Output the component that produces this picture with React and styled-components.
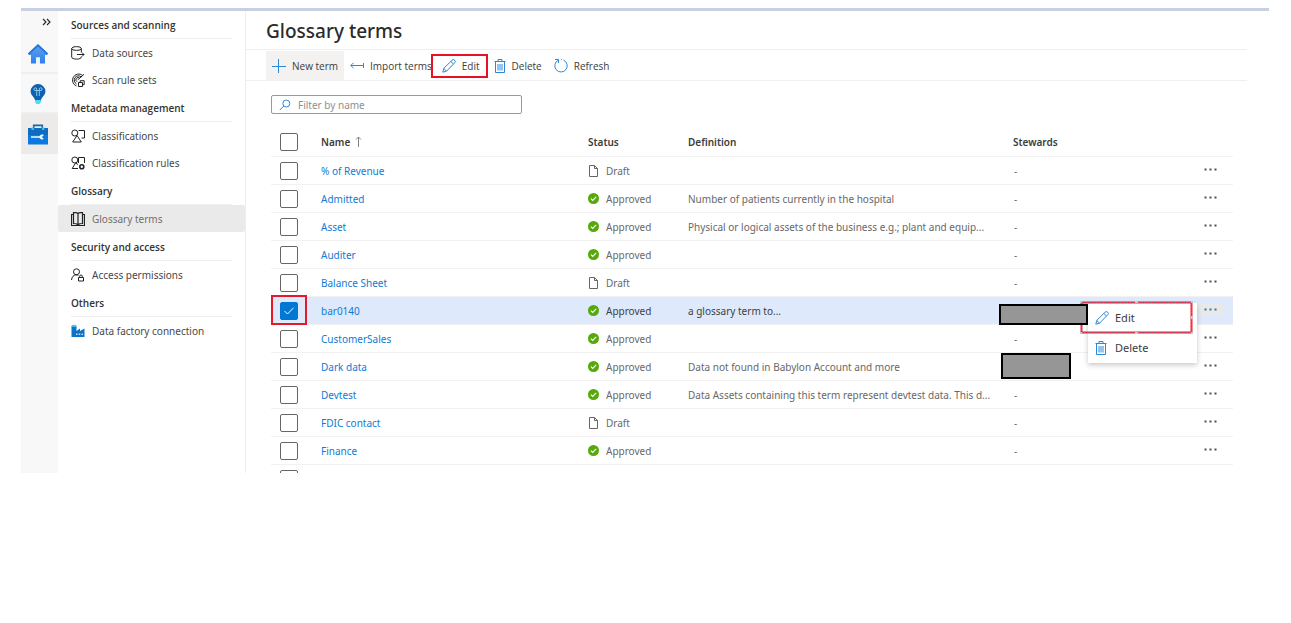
import React from "react";
import styled, { createGlobalStyle, css } from "styled-components";

const compactFont = `"Open Sans", "Noto Sans", sans-serif`;

const GlobalStyle = createGlobalStyle`
  * { box-sizing: border-box; }
  body {
    margin: 0;
    background: #fff;
    color: #484848;
    font-family: "Noto Sans", "Open Sans", sans-serif;
    font-size: 10px;
    line-height: 16px;
  }
  button, input { font: inherit; color: inherit; }
  svg { display: block; flex: none; }
`;

const Page = styled.div`
  display: flex;
  margin: 8px 22px 0 21px;
  border-top: 3px solid #c8d0df;
`;

const Rail = styled.nav`
  flex: none;
  width: 37px;
  background: #f8f8f8;
`;

const RailToggle = styled.button`
  display: flex;
  align-items: center;
  justify-content: flex-end;
  width: 100%;
  height: 23px;
  padding: 0 7px 2px 0;
  border: 0;
  background: none;
`;

const RailLink = styled.a`
  display: flex;
  align-items: center;
  justify-content: center;
  height: 40px;
  padding: ${(p) => (p.$active ? "3px" : "1px")} 3px 0 0;
  border-bottom: 2px solid ${(p) => (p.$active ? "#edebe9" : "#efefef")};
  background: ${(p) => (p.$active ? "#edebe9" : "transparent")};
`;

const SideNav = styled.nav`
  flex: none;
  width: 188px;
  border-right: 1px solid #eee;
`;

const NavSection = styled.section`
  padding-bottom: 1px;
`;

const NavHeading = styled.h2`
  height: 28px;
  margin: 0 13px;
  border-bottom: 1px solid #eee;
  font-family: ${compactFont};
  font-size: 10px;
  font-weight: 600;
  line-height: 28px;
  color: #333;
`;

const NavLink = styled.a`
  display: flex;
  align-items: center;
  gap: 7px;
  height: 27px;
  padding-left: 13px;
  border-radius: 2px;
  text-decoration: none;
  color: ${(p) => (p.$active ? "#707070" : "#484848")};
  background: ${(p) => (p.$active ? "#eaeaea" : "transparent")};
`;

const Main = styled.main`
  flex: 1;
  min-width: 0;
  padding-right: 22px;
`;

const Title = styled.h1`
  height: 39px;
  margin: 0;
  padding: 2px 0 0 20px;
  border-bottom: 1px solid #efefef;
  font-size: 19px;
  font-weight: 500;
  line-height: 37px;
  color: #2b2b2b;
`;

const Toolbar = styled.div`
  display: flex;
  align-items: center;
  height: 31px;
  padding: 1px 0 0 20px;
  border-bottom: 1px solid #efefef;
`;

const ToolButton = styled.button`
  display: flex;
  align-items: center;
  gap: 6px;
  height: 29px;
  padding: 0 6px;
  border: 0;
  font-family: ${compactFont};
  white-space: nowrap;
  color: #3c3c3c;
  background: ${(p) => (p.$primary ? "#f3f2f1" : "none")};
  ${(p) =>
    p.$outlined &&
    css`
      height: 24px;
      margin-left: -7px;
      padding: 0 6px 0 9px;
      border: 2px solid #e81123;
    `}
`;

const Content = styled.section`
  padding: 14px 14px 0 25px;
`;

const Search = styled.label`
  display: flex;
  align-items: center;
  gap: 7px;
  width: 251px;
  height: 19px;
  padding: 0 7px;
  border: 1px solid #999;
  border-radius: 2px;
`;

const SearchInput = styled.input`
  flex: 1;
  min-width: 0;
  height: 16px;
  padding: 0;
  border: 0;
  outline: 0;
  background: none;
  &::placeholder { color: #909090; opacity: 1; }
`;

const Table = styled.table`
  width: 100%;
  margin-top: 14px;
  table-layout: fixed;
  border-collapse: separate;
  border-spacing: 0;
`;

const Col = styled.col`
  width: ${(p) => p.$w};
`;

const HeadCell = styled.th`
  height: 29px;
  padding: 0;
  border-bottom: 1px solid #f2f2f2;
  text-align: left;
  font-weight: 600;
  color: #3c3c3c;
`;

const Row = styled.tr`
  background: ${(p) => (p.$selected ? "#dfe9fc" : "transparent")};
  color: ${(p) => (p.$selected ? "#404040" : "#686868")};
`;

const Cell = styled.td`
  position: relative;
  height: 28px;
  padding: 0;
  border-bottom: 1px solid #f2f2f2;
  white-space: nowrap;
`;

const Inline = styled.span`
  display: flex;
  align-items: center;
  gap: 7px;
`;

const SortLabel = styled.span`
  display: flex;
  align-items: center;
  gap: 5px;
`;

const Checkbox = styled.input`
  appearance: none;
  display: block;
  width: 18px;
  height: 18px;
  margin: 0 0 0 9px;
  border: 1px solid #666;
  border-radius: 2px;
  background: #fff;
  &:checked {
    border-color: #0078d4;
    background: #0078d4;
  }
`;

const Tick = styled.svg`
  position: absolute;
  left: 9px;
  top: 5px;
  pointer-events: none;
`;

const Highlight = styled.span`
  position: absolute;
  left: 0;
  top: -2px;
  width: 36px;
  height: 30px;
  border: 2px solid #e5192a;
  pointer-events: none;
`;

const TermLink = styled.a`
  color: #0f7ad4;
  text-decoration: none;
`;

const Redaction = styled.span`
  position: absolute;
  z-index: 3;
  left: ${(p) => p.$left};
  top: ${(p) => p.$top};
  width: ${(p) => p.$width};
  height: ${(p) => p.$height};
  border: 2px solid #000;
  background: #969696;
`;

const NoSteward = styled.span`
  padding-left: 1px;
`;

const MoreButton = styled.button`
  display: flex;
  align-items: center;
  justify-content: center;
  width: 25px;
  height: 13px;
  margin: 0 0 3px 1px;
  padding: 0;
  border: 0;
  border-radius: 2px;
  color: ${(p) => (p.$open ? "#0068b8" : "#333")};
  background: ${(p) => (p.$open ? "#e9e9e9" : "none")};
`;

const Menu = styled.div`
  position: absolute;
  z-index: 2;
  right: 36px;
  top: 6px;
  width: 109px;
  background: #fff;
  box-shadow: 0 2px 5px rgba(0, 0, 0, 0.22);
`;

const MenuItem = styled.button`
  display: grid;
  grid-template-columns: 14px auto;
  align-items: center;
  justify-content: start;
  justify-items: start;
  gap: 6px;
  width: 100%;
  height: 30px;
  padding: 0 7px;
  border: 0;
  background: none;
  font-size: 11px;
  color: #3c3c3c;
`;

const MenuOutline = styled.svg`
  position: absolute;
  left: -8px;
  top: -2px;
  pointer-events: none;
`;

const Cut = styled.div`
  height: 8px;
  padding-top: 5px;
  overflow: hidden;
`;

const blue = "#2b88d8";

const PencilIcon = () => (
  <svg width="14" height="14" viewBox="0 0 14 14" fill="none" stroke={blue}>
    <path d="M.8 13.200l1-3.800L10 1.200a1.700 1.700 0 0 1 2.700 2.600L4.600 12.100zM8.800 2.500l2.700 2.600M1.900 9.500l2.600 2.600" />
  </svg>
);

const TrashIcon = () => (
  <svg width="12" height="14" viewBox="0 0 12 14" fill="none" stroke={blue}>
    <path d="M.5 2.500h11M4 2.500v-2h4v2M1.500 2.500v11h9v-11M4 5v6.500M6 5v6.500M8 5v6.500" />
  </svg>
);

const PlusIcon = () => (
  <svg width="14" height="14" viewBox="0 0 14 14" stroke={blue}>
    <path d="M6.500 0v14M0 7.500h14" />
  </svg>
);

const ImportIcon = () => (
  <svg width="14" height="14" viewBox="0 0 14 14" fill="none" stroke={blue}>
    <path d="M.8 6.500h12.700M13.500 4v5M3.500 3.800L.8 6.500l2.700 2.700" />
  </svg>
);

const RefreshIcon = () => (
  <svg width="14" height="15" viewBox="0 0 14 15" fill="none" stroke={blue}>
    <path d="M9.500 2.100A6.200 6.200 0 1 1 4.300 2.200M1 1.500h3.500v3.400M7 1.500h.8" />
  </svg>
);

const SearchIcon = () => (
  <svg width="12" height="12" viewBox="0 0 12 12" fill="none" stroke={blue}>
    <circle cx="7.300" cy="4.500" r="3.500" />
    <path d="M4.800 7L.8 11" />
  </svg>
);

const ChevronsIcon = () => (
  <svg width="9" height="8" viewBox="0 0 9 8" fill="none" stroke="#222" strokeWidth="1.100">
    <path d="M1 1l3 3-3 3M5 1l3 3-3 3" />
  </svg>
);

const HomeIcon = () => (
  <svg width="20" height="20" viewBox="0 0 20 20">
    <defs>
      <linearGradient id="house" x2="0" y2="1">
        <stop stopColor="#5ea0ef" />
        <stop offset="1" stopColor="#2f80ec" />
      </linearGradient>
    </defs>
    <path d="M10 .5L0 9.800 1.100 11H3v8.500h5v-6h4v6h5V11h1.900l1.100-1.200z" fill="url(#house)" />
    <path d="M10 0L0 9.300l1 1.500L10 2.500l9 8.300 1-1.500z" fill="#2377da" />
    <path d="M8 13.500h4v6H8z" fill="#eef3fb" />
  </svg>
);

const BulbIcon = () => (
  <svg width="16" height="20" viewBox="0 0 16 20">
    <path d="M8 0a7.400 7.400 0 0 0-7.400 7.300c0 4 3.400 5.400 4.400 8.700h6c1-3.300 4.400-4.700 4.400-8.700A7.400 7.400 0 0 0 8 0z" fill="#0c62b0" />
    <path d="M5 16h6v2l-1.500 2h-3L5 18z" fill="#4fdcf3" />
    <path d="M6.700 12V6.500H4.900a1.400 1.400 0 1 1 1.800-1.400v1.400h2.600V5.100a1.400 1.400 0 1 1 1.800 1.400H9.300V12" fill="none" stroke="#a9dcf7" strokeWidth=".8" />
  </svg>
);

const ToolboxIcon = () => (
  <svg width="20" height="21" viewBox="0 0 20 21">
    <path d="M5.700 4.500V1.400h8.600v3.100" fill="none" stroke="#1169b5" strokeWidth="1.600" />
    <rect y="4" width="20" height="8" fill="#0f6cbd" />
    <rect y="11" width="20" height="9.500" fill="#0a7ae0" />
    <path d="M3.500 3.500h2.400V6H3.500zM14 3.500h2.400V6H14z" fill="#49b8ef" />
    <path d="M3 12.200h8.500c.8-1.700 2.700-2.200 4.500-1.300l-1.700 1.300v1.500l1.700 1.300c-1.800.9-3.700.4-4.500-1.300H3z" fill="#f4f8fc" />
  </svg>
);

const Glyph = ({ children }) => (
  <svg width="14" height="14" viewBox="0 0 14 14" fill="none" stroke="#222">
    {children}
  </svg>
);

const DataSourceIcon = () => (
  <Glyph>
    <ellipse cx="5.500" cy="2.500" rx="4.800" ry="1.900" />
    <path d="M.7 2.500v8.700c0 1 2 1.900 4.800 1.900s4.800-.8 4.800-1.900v-.7M10.300 2.500v4M6 8.500h7M11 6.500l2 2-2 2" />
  </Glyph>
);

const ScanIcon = () => (
  <Glyph>
    <path d="M11.500 2.300A6.200 6.200 0 1 0 5.500 13M10.300 4A4.200 4.200 0 1 0 5.500 10.800M8.800 5.400A2.200 2.200 0 1 0 6 8.700M6.800 6.800L13 1.300M7.500 9.500h4v4h-4zM9.200 9.500V7.700h4v4h-1.700" />
  </Glyph>
);

const ShapesIcon = () => (
  <Glyph>
    <path d="M7.500 1.500h6v7.500h-3M6 6.500L10.300 13H1.700z" />
    <circle cx="3.800" cy="4" r="3" />
  </Glyph>
);

const ShapeRulesIcon = () => (
  <Glyph>
    <path d="M7.500 7V1.500h6V7M7 12.500H1.200L4.500 7l2.500 1.500" />
    <circle cx="3.800" cy="4" r="3" />
    <circle cx="10.800" cy="10.800" r="2" strokeWidth="1.600" />
  </Glyph>
);

const BookIcon = () => (
  <Glyph>
    <path d="M7 1.500V13M7 1.500C5.800.6 4 .5 2.500.5v11c1.500 0 3.300.2 4.500 1.300 1.200-1.100 3-1.300 4.500-1.300v-11C10 .5 8.200.6 7 1.500zM2.500 2.500h-2v11h13v-11h-2" strokeWidth="1.200" />
  </Glyph>
);

const PersonLockIcon = () => (
  <Glyph>
    <circle cx="5.500" cy="3.800" r="3" />
    <path d="M.5 12c.3-3 2-5 4.500-5.200 1 0 1.800.3 2.400.8M7.500 9.500h5V13h-5zM8.700 9.300V8.200c0-1.600 2.600-1.600 2.600 0v1.100" />
  </Glyph>
);

const FactoryIcon = () => (
  <svg width="14" height="14" viewBox="0 0 14 14">
    <path d="M.5 2h5v5L9 4.600V7l4.500-2.400V13H.5z" fill="#0a74c9" />
    <ellipse cx="3" cy="1.900" rx="2.500" ry="1.100" fill="#4cc9ea" />
    <path d="M5 9.500h1.500V11H5zM7.700 9.500h1.500V11H7.700zM10.400 9.500h1.500V11h-1.500z" fill="#bfe3fa" />
  </svg>
);

const DocIcon = () => (
  <svg width="11" height="12" viewBox="0 0 11 12" fill="none" stroke="#666">
    <path d="M1.500.5h5l3 3v8h-8zM6.500.5v3h3" />
  </svg>
);

const ApprovedIcon = () => (
  <svg width="11" height="12" viewBox="0 0 11 12">
    <circle cx="5.500" cy="5.500" r="5.500" fill="#57a80b" />
    <path d="M2.900 5.700l1.800 1.800 3.500-3.600" fill="none" stroke="#fff" strokeWidth="1.100" />
  </svg>
);

const SortIcon = () => (
  <svg width="7" height="12" viewBox="0 0 7 12" fill="none" stroke="#777">
    <path d="M3.500 11V1M1 3.500L3.500 1 6 3.500" strokeWidth=".9" />
  </svg>
);

const DotsIcon = () => (
  <svg width="13" height="3" viewBox="0 0 13 3" fill="currentColor">
    <path d="M.5.500h2v2h-2zM5.500.500h2v2h-2zM10.500.500h2v2h-2z" opacity=".85" />
  </svg>
);

const sections = [
  { title: "Sources and scanning", items: [["Data sources", DataSourceIcon], ["Scan rule sets", ScanIcon]] },
  { title: "Metadata management", items: [["Classifications", ShapesIcon], ["Classification rules", ShapeRulesIcon]] },
  { title: "Glossary", items: [["Glossary terms", BookIcon]] },
  { title: "Security and access", items: [["Access permissions", PersonLockIcon]] },
  { title: "Others", items: [["Data factory connection", FactoryIcon]] },
];

const terms = [
  { name: "% of Revenue", status: "Draft" },
  { name: "Admitted", status: "Approved", definition: "Number of patients currently in the hospital" },
  { name: "Asset", status: "Approved", definition: "Physical or logical assets of the business e.g.; plant and equip..." },
  { name: "Auditer", status: "Approved" },
  { name: "Balance Sheet", status: "Draft" },
  { name: "bar0140", status: "Approved", definition: "a glossary term to...", selected: true, cover: { $left: "-14px", $top: "7px", $width: "89px", $height: "21px" } },
  { name: "CustomerSales", status: "Approved" },
  { name: "Dark data", status: "Approved", definition: "Data not found in Babylon Account and more", cover: { $left: "-12px", $top: "0", $width: "70px", $height: "26px" } },
  { name: "Devtest", status: "Approved", definition: "Data Assets containing this term represent devtest data. This d..." },
  { name: "FDIC contact", status: "Draft" },
  { name: "Finance", status: "Approved" },
];

const ContextMenu = () => (
  <Menu role="menu">
    <MenuItem role="menuitem"><PencilIcon />Edit</MenuItem>
    <MenuItem role="menuitem"><TrashIcon />Delete</MenuItem>
    <MenuOutline width="113" height="33" viewBox="0 0 113 33" fill="none">
      <rect x="1.500" y="1.500" width="110" height="30" stroke="#ee2233" strokeWidth="2" />
      <rect x="1.500" y="1.500" width="110" height="30" stroke="#7d86a6" strokeWidth="1" strokeDasharray="1 2" />
      <path d="M0 0h2v2H0zM55 0h3v2h-3zM111 0h2v2h-2zM111 15h2v3h-2zM111 31h2v2h-2zM55 31h3v2h-3zM0 31h2v2H0z" fill="#c9c9c9" />
    </MenuOutline>
  </Menu>
);

const TermRow = ({ term }) => (
  <Row $selected={term.selected}>
    <Cell>
      <Checkbox type="checkbox" aria-label={term.name} defaultChecked={term.selected} />
      {term.selected && (
        <>
          <Tick width="18" height="18" viewBox="0 0 18 18" fill="none" stroke="#fff">
            <path d="M4.500 9l3 3 6-6.200" />
          </Tick>
          <Highlight />
        </>
      )}
    </Cell>
    <Cell><TermLink href="#">{term.name}</TermLink></Cell>
    <Cell>
      <Inline>{term.status === "Draft" ? <DocIcon /> : <ApprovedIcon />}{term.status}</Inline>
    </Cell>
    <Cell>{term.definition}</Cell>
    <Cell>{term.cover ? <Redaction {...term.cover} /> : <NoSteward>-</NoSteward>}</Cell>
    <Cell>
      <MoreButton aria-label={"More actions for " + term.name} $open={term.selected}><DotsIcon /></MoreButton>
      {term.selected && <ContextMenu />}
    </Cell>
  </Row>
);

export default function App() {
  return (
    <>
      <GlobalStyle />
      <Page>
        <Rail aria-label="Areas">
          <RailToggle aria-label="Expand"><ChevronsIcon /></RailToggle>
          <RailLink href="#" aria-label="Home"><HomeIcon /></RailLink>
          <RailLink href="#" aria-label="Insights"><BulbIcon /></RailLink>
          <RailLink href="#" aria-label="Management" $active><ToolboxIcon /></RailLink>
        </Rail>
        <SideNav aria-label="Management">
          {sections.map((s) => (
            <NavSection key={s.title}>
              <NavHeading>{s.title}</NavHeading>
              {s.items.map(([label, Icon]) => (
                <NavLink href="#" key={label} $active={label === "Glossary terms"}><Icon />{label}</NavLink>
              ))}
            </NavSection>
          ))}
        </SideNav>
        <Main>
          <Title>Glossary terms</Title>
          <Toolbar>
            <ToolButton $primary><PlusIcon />New term</ToolButton>
            <ToolButton><ImportIcon />Import terms</ToolButton>
            <ToolButton $outlined><PencilIcon />Edit</ToolButton>
            <ToolButton><TrashIcon />Delete</ToolButton>
            <ToolButton><RefreshIcon />Refresh</ToolButton>
          </Toolbar>
          <Content>
            <Search>
              <SearchIcon />
              <SearchInput aria-label="Filter by name" placeholder="Filter by name" />
            </Search>
            <Table>
              <colgroup>
                <Col $w="50px" />
                <Col $w="267px" />
                <Col $w="100px" />
                <Col />
                <Col $w="184px" />
                <Col $w="36px" />
              </colgroup>
              <thead>
                <tr>
                  <HeadCell><Checkbox type="checkbox" aria-label="Select all" /></HeadCell>
                  <HeadCell><SortLabel>Name<SortIcon /></SortLabel></HeadCell>
                  <HeadCell>Status</HeadCell>
                  <HeadCell>Definition</HeadCell>
                  <HeadCell>Stewards</HeadCell>
                  <HeadCell />
                </tr>
              </thead>
              <tbody>
                {terms.map((t) => <TermRow key={t.name} term={t} />)}
              </tbody>
            </Table>
            <Cut><Checkbox type="checkbox" aria-label="Next term" /></Cut>
          </Content>
        </Main>
      </Page>
    </>
  );
}
